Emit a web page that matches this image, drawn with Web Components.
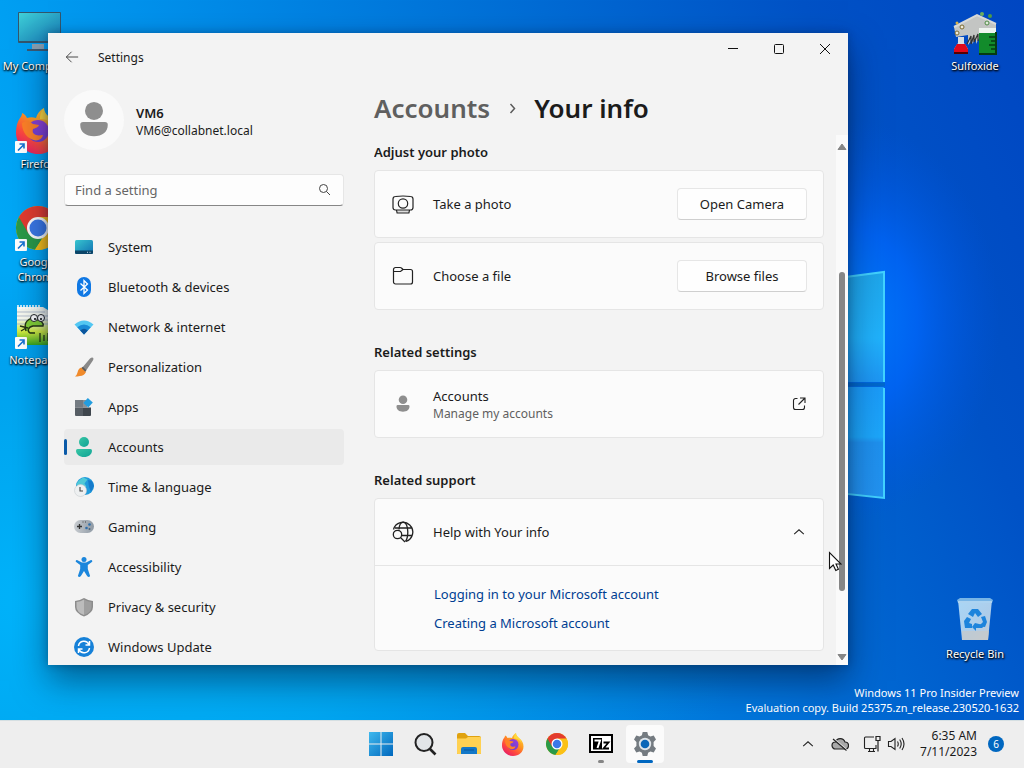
<!DOCTYPE html>
<html lang="en">
<head>
<meta charset="utf-8">
<title>Settings</title>
<style>
  html, body {
    height: 100%;
    margin: 0;
  }

  body {
    --font: "Noto Sans", "Open Sans", sans-serif;
    --text: #1b1b1b;
    --secondary-text: #5f5f5f;
    --accent: #0067c0;
    --card: #fbfbfb;
    --line: #e5e5e5;
    font-family: var(--font);
    font-size: 13px;
    line-height: 20px;
    color: var(--text);
    overflow: hidden;
  }
</style>
</head>
<body>
<desktop-shell>
  <desktop-icon slot="left" icon="computer" label="My Computer"></desktop-icon>
  <desktop-icon slot="left" icon="firefox" label="Firefox" shortcut></desktop-icon>
  <desktop-icon slot="left" icon="chrome" label="Google Chrome" shortcut></desktop-icon>
  <desktop-icon slot="left" icon="notepad" label="Notepad++" shortcut></desktop-icon>
  <desktop-icon slot="right" icon="sulfoxide" label="Sulfoxide"></desktop-icon>
  <desktop-icon slot="right" icon="bin" label="Recycle Bin" style="grid-row: 7"></desktop-icon>
  <settings-window slot="window"></settings-window>
  <task-bar slot="taskbar"></task-bar>
</desktop-shell>

<script>
const icons = {
  computer: ['0 0 48 48', `
    <defs><linearGradient id="a" x1="0" y1="0" x2="1" y2="1"><stop offset="0" stop-color="#3fd0d8"/><stop offset="1" stop-color="#1579b4"/></linearGradient></defs>
    <path d="M18 36h12v6H18z" fill="#8aa0b0"/><path d="M13 41h24v2H13z" fill="#3c5a73"/>
    <rect x="4" y="4" width="43" height="31" rx="1" fill="#33566c"/><rect x="5" y="5" width="41" height="28" fill="url(#a)"/>`],
  firefox: ['0 0 48 48', `
    <defs>
      <linearGradient id="a" x1=".9" y1="0" x2=".2" y2="1"><stop offset="0" stop-color="#ffe23f"/><stop offset=".4" stop-color="#ff9a1f"/><stop offset=".7" stop-color="#ff4a3d"/><stop offset="1" stop-color="#e3166d"/></linearGradient>
      <linearGradient id="b" x1="0" y1="1" x2="1" y2="0"><stop offset="0" stop-color="#5a3fd0"/><stop offset="1" stop-color="#a040d8"/></linearGradient>
    </defs>
    <path d="M6 12c1-1 2-3 2-5 3 1 4 3 5 5 3-1 6-1 9 0 1-4 4-8 8-10 0 5 3 7 7 11 5 4 8 9 8 16 0 11-9 19-21 19S2 38 2 27c0-6 1-11 4-15z" fill="url(#a)"/>
    <path d="M30 2c0 5 3 7 7 11 3 3 4 6 4 9-3-6-8-9-15-9 0-4 1-8 4-11z" fill="#ffd93b"/>
    <circle cx="24" cy="25" r="11" fill="url(#b)"/>
    <path d="M8 17c4-3 8-2 11 1l6 1c-1 3-4 3-6 4-1 3 0 5 3 6 3 1 5 0 7 0-1 5-7 7-12 4-6-3-9-9-9-16z" fill="#ff8126"/>`],
  chrome: ['0 0 48 48', `
    <circle cx="24" cy="24" r="22" fill="#fbc116"/>
    <path d="M24 24L4.900 13A22 22 0 0 0 21 45.800l11-17z" fill="#2a9a48"/>
    <path d="M24 24L43 13A22 22 0 0 0 4.900 13l9.500 16.500z" fill="#e33b2e"/>
    <path d="M24 13h19a22 22 0 0 1-22 32.800l10.500-16.300z" fill="#fbc116"/>
    <circle cx="24" cy="24" r="11" fill="#fff"/><circle cx="24" cy="24" r="8.500" fill="#3b78e7"/>`],
  notepad: ['0 0 48 48', `
    <defs><linearGradient id="a" x1="0" y1="0" x2="0" y2="1"><stop offset=".3" stop-color="#f8faf0"/><stop offset=".65" stop-color="#d0ec40"/><stop offset="1" stop-color="#37a51c"/></linearGradient></defs>
    <path d="M3 5h26l13 8v30H3z" fill="url(#a)"/>
    <path d="M3 10h28M3 14h31M3 18h36M3 22h38" stroke="#b5bfcc"/>
    <path d="M4 7V3m3 4V3m3 4V3m3 4V3m3 4V3m3 4V3m3 4V3m3 4V3" stroke="#fff" stroke-width="1.500"/>
    <path d="M12 29c-3-9 3-14 9-12 6 1 9 4 8 7H19c-5 1-6 5-3 7h5" fill="#83cf35" stroke="#263412" stroke-width="1.400"/>
    <circle cx="20" cy="16" r="3.500" fill="#fff" stroke="#222"/><circle cx="27" cy="16" r="3.500" fill="#fff" stroke="#222"/><circle cx="21" cy="17" r="1"/><circle cx="27" cy="17" r="1"/>
    <path d="M6 24l8 2M7 29l5-3m14 14v-9m4 8v-6m4 6v-8m4 8v-6" stroke="#263412" stroke-width="1.300" fill="none"/>`],
  sulfoxide: ['0 0 48 48', `
    <path d="M3 19l23-12 19 9v9H28v5l-3 6v-5l-4 5 1-6-5 7V27L5 29z" fill="#c3c5c3"/>
    <path d="M3 19l23-12 19 9" fill="none" stroke="#d7d9d7" stroke-width="2"/>
    <path d="M16 36l4-8v8l3-9v7l4-8v7" fill="none" stroke="#333" stroke-width="1.200"/>
    <circle cx="6" cy="15" r="1.500" fill="#d8b34a"/><circle cx="11" cy="19" r="2" fill="#efeadc" stroke="#7a6a30"/><circle cx="6" cy="25" r="2" fill="#efeadc" stroke="#7a6a30"/>
    <circle cx="31" cy="6" r="2" fill="#6fae5e"/><circle cx="36" cy="15" r="2" fill="#dfe8d8" stroke="#4e8a44"/><circle cx="39" cy="8" r="2" fill="#4e9a44"/>
    <path d="M7 29h6v6l4 6v4H3v-4l4-6z" fill="#d7dde4"/><path d="M6 36h8l3 5v4H3v-4z" fill="#e10a1c"/><path d="M3 45h14" stroke="#500" stroke-width="2"/>
    <path d="M28 21h17v25H28z" fill="#128b2b"/><path d="M28 20h17v5H28z" fill="#eef4ee"/>
    <path d="M45 24v22H28" fill="none" stroke="#063b12" stroke-width="2"/><path d="M38 29h6m-4 4h4m-6 4h6m-4 4h4" stroke="#063b12" stroke-width="1.600"/>`],
  bin: ['0 0 48 48', `
    <defs><linearGradient id="a" x1="0" y1="0" x2="1" y2="1"><stop offset="0" stop-color="#a9d6f6"/><stop offset=".6" stop-color="#adcdea"/><stop offset="1" stop-color="#c9ccd0"/></linearGradient></defs>
    <path d="M7 4h34l-4 40H11z" fill="url(#a)"/><path d="M6 4l3-2h30l3 2-1 3H7z" fill="#78b5e6"/><path d="M7 6h34" stroke="#e2f1fb"/>
    <path d="M11 35h27l-1 9H11z" fill="#c6c9c9" opacity=".7"/>
    <g fill="#1d84dc"><path d="M17 18l4-5h6l4 5-4 3-3-4-2 4z"/><path d="M30 21l4-1 2 6-2 5-6-1 4-4z"/><path d="M24 27l-3 4 4 4v-3h6l3-3-6-1z"/><path d="M16 21l-3 4 1 7h7v-4l-3-1 2-4z"/></g>`],

  back: ['0 0 16 16', `<path d="M15 8H1.500m6-6l-6 6 6 6" fill="none" stroke="#333"/>`],
  minimize: ['0 0 12 12', `<path d="M1 5.500h10" stroke="#111"/>`],
  maximize: ['0 0 12 12', `<rect x="1.500" y="1.500" width="9" height="9" rx="1" fill="none" stroke="#111"/>`],
  close: ['0 0 12 12', `<path d="M1 1l10 10M11 1L1 11" stroke="#111"/>`],
  user: ['0 0 32 40', `<circle cx="16" cy="10.500" r="9.500" fill="#8e8e8e"/><path d="M4.500 22h23a3 3 0 0 1 3 3c0 8-6 12-14.500 12S1.500 33 1.500 25a3 3 0 0 1 3-3z" fill="#8e8e8e"/>`],
  find: ['0 0 16 16', `<circle cx="7.500" cy="6.500" r="4" fill="none" stroke="#444"/><path d="M10.500 9.500L14 13" stroke="#444"/>`],
  chevron: ['0 0 16 16', `<path d="M6.500 4L10.500 8.500l-4 4.500" fill="none" stroke="#5a5a5a" stroke-width="1.500"/>`],
  up: ['0 0 16 16', `<path d="M2.500 10.500L8 5.500l5.500 5" fill="none" stroke="#222" stroke-width="1.200"/>`],
  camera: ['0 0 24 24', `<g fill="none" stroke="#222" stroke-width="1.200"><path d="M5.500 18l.6 3h11.800l.6-3" fill="#ddd"/><path d="M4.500 4.500Q12 3.500 19.500 4.500q2.500 0 2.500 2.500v8.500q0 2.500-2.500 2.500h-15Q2 18 2 15.500V7q0-2.500 2.500-2.500z"/><circle cx="12" cy="11.500" r="4.700"/></g>`],
  folder: ['0 0 24 24', `<path d="M2.500 17V5.500a2 2 0 0 1 2-2H9q1 0 2 1l1 1h7.500a2 2 0 0 1 2 2V18a2 2 0 0 1-2 2h-15a2 2 0 0 1-2-2zM3 7.500h6.500l2.500-2" fill="none" stroke="#222" stroke-width="1.200"/>`],
  external: ['0 0 16 16', `<path d="M6.500 2.500h-2a2 2 0 0 0-2 2v7a2 2 0 0 0 2 2h7a2 2 0 0 0 2-2v-2M9 2h5v5M14 2L7.500 8.500" fill="none" stroke="#222" stroke-width="1.100"/>`],
  globe: ['0 0 24 24', `<g fill="none" stroke="#222" stroke-width="1.300"><path d="M2.500 9.500A9.800 9.800 0 1 1 15 21.400M4 8h17M11 15.500h10.500"/><path d="M8 9.500c.3-4.500 2-7.300 4.200-7.300 2.800 0 4.600 4.300 4.600 9.800 0 4-.8 7.500-2.300 9.500"/><circle cx="6.500" cy="14.500" r="4.200"/><path d="M9.500 17.500l4.500 4.500"/></g>`],

  system: ['0 0 20 20', `
    <defs><linearGradient id="a" x1="0" y1="0" x2="1" y2="1"><stop offset="0" stop-color="#37c5cf"/><stop offset="1" stop-color="#1070b2"/></linearGradient></defs>
    <rect x="1" y="3" width="18" height="14" rx="1.500" fill="url(#a)"/><path d="M1 13.500h18v2a1.500 1.500 0 0 1-1.500 1.500h-15A1.500 1.500 0 0 1 1 15.500z" fill="#0c4568"/><path d="M13 15.300h1m1.500 0h1" stroke="#cde"/>`],
  bluetooth: ['0 0 20 20', `<rect x="3" width="14" height="20" rx="7" fill="#0f78e4"/><path d="M6.500 6.500l7 6.500-3.500 3.500v-13L13.500 7l-7 6.500" fill="none" stroke="#fff" stroke-width="1.300"/>`],
  network: ['0 0 20 20', `<path d="M.5 7.500Q10-.5 19.500 7.500L10 17.500z" fill="#53c7f2"/><path d="M3.300 10.300Q10 4.500 16.700 10.300L10 17.500z" fill="#1a8ad6"/><path d="M6.200 13.500Q10 10 13.800 13.500L10 17.500z" fill="#0c559c"/>`],
  brush: ['0 0 20 20', `<path d="M19 .8q1 1-.3 3L11.500 14.500 8 11 16 1.500Q18-.2 19 .8z" fill="#898989"/><path d="M7.500 10.500L12 15q-2 4-6 4-3 .5-5 .5 2-1.500 2.500-4 1-4.500 4-5z" fill="#f08a2b"/><path d="M8.800 9.800l3.500 3.500-1 1.500L7.600 11z" fill="#5a5a5a"/>`],
  apps: ['0 0 20 20', `<path d="M1 3h8v7.500H1z" fill="#747b82"/><path d="M1 10.500h8V19H2q-1 0-1-1z" fill="#565d64"/><path d="M9 10.500h8V18q0 1-1 1H9z" fill="#3f464d"/><path d="M9 3h4v7.500H9z" fill="#8b9196"/><path d="M13.800 1l5 4.500-4.500 5-5-4.500z" fill="#239ddf"/>`],
  accounts: ['0 0 20 20', `<defs><linearGradient id="a" x1="0" y1="0" x2="1" y2="1"><stop offset="0" stop-color="#38c6a4"/><stop offset="1" stop-color="#0fa396"/></linearGradient></defs><circle cx="10" cy="5" r="5" fill="url(#a)"/><path d="M3.500 12h13a1.500 1.500 0 0 1 1.500 1.500c0 4-3.500 6.500-8 6.500s-8-2.500-8-6.500A1.500 1.500 0 0 1 3.500 12z" fill="url(#a)"/>`],
  time: ['0 0 20 20', `<circle cx="11" cy="9" r="9" fill="#209bdc"/><path d="M2.500 8q1-5 7-7.500l4 2-3 4 2 3H8z" fill="#4fc9d6"/><path d="M14 3l4 1 2 5-3 6-2-5z" fill="#157bcb"/><circle cx="6.500" cy="13.500" r="6" fill="#eef0f1" stroke="#c7cdd0" stroke-width=".6"/><path d="M6 10v4h3" fill="none" stroke="#444" stroke-width="1.100"/>`],
  gaming: ['0 0 20 20', `<defs><linearGradient id="a" x1="0" y1="0" x2="1" y2="0"><stop offset="0" stop-color="#c8ccd0"/><stop offset="1" stop-color="#8e99a4"/></linearGradient></defs><rect y="3" width="20" height="13" rx="6.500" fill="url(#a)"/><path d="M5.500 7v5M3 9.500h5" stroke="#333" stroke-width="1.300"/><circle cx="12.500" cy="11" r="1.300" fill="#2e6eaa"/><circle cx="15.500" cy="7.500" r="1.300" fill="#2e6eaa"/><circle cx="15.500" cy="12" r="1" fill="#47637c"/><path d="M8.500 5h1m1.500 0h1" stroke="#444"/>`],
  access: ['0 0 20 20', `<circle cx="10" cy="2.500" r="2.500" fill="#1b86dc"/><path d="M3 3L8 5.500h4L17 3q1.600 0 1.200 1.800L13.800 8v4l2.300 7q-1.200 1.800-3 0L10 14l-3.100 5q-1.800 1.800-3 0l2.300-7V8L1.800 4.800Q1.400 3 3 3z" fill="#1b86dc"/>`],
  shield: ['0 0 20 20', `<path d="M10 1q4 2.500 9 3v6q0 6-9 9.500Q1 16 1 10V4q5-.5 9-3z" fill="#8c8c8c"/><path d="M10 2.500q3.500 2 7.500 2.500v5q0 5-7.500 8z" fill="#9f9f9f"/><path d="M10 2.500Q6.500 4.500 2.500 5v5q0 5 7.500 8z" fill="#bcbcbc"/>`],
  update: ['0 0 20 20', `<circle cx="10" cy="10" r="10" fill="#1681d8"/><path d="M4.500 9A5.500 5.500 0 0 1 15 7.500m.5-3.500v4h-4M15.500 11A5.500 5.500 0 0 1 5 12.500M4.500 16v-4h4" fill="none" stroke="#fff" stroke-width="1.500"/>`],

  start: ['0 0 24 24', `<defs><linearGradient id="a" gradientUnits="userSpaceOnUse" x1="0" y1="0" x2="24" y2="24"><stop offset="0" stop-color="#3fb9ee"/><stop offset="1" stop-color="#0067bd"/></linearGradient></defs><path d="M0 0h11.500v11.500H0zm12.500 0H24v11.500H12.500zM0 12.500h11.500V24H0zm12.500 0H24V24H12.500z" fill="url(#a)"/>`],
  search: ['0 0 24 24', `<circle cx="11" cy="10.500" r="8.500" fill="#e2e5e8" stroke="#222" stroke-width="2"/><path d="M17 17l5.500 5.500" stroke="#222" stroke-width="2.600"/>`],
  explorer: ['0 0 24 24', `<path d="M0 3q0-2 2-2h6l3 3h11q2 0 2 2v15q0 1-1 1H1q-1 0-1-1z" fill="#e0a20f"/><path d="M0 6.500h9l2-1.500h12q1 0 1 1v15q0 1-1 1H1q-1 0-1-1z" fill="#ffd152"/><path d="M4 22v-5q0-2 2-2h12q2 0 2 2v5z" fill="#1378c8"/><path d="M7 18h10" stroke="#0a569c"/>`],
  sevenzip: ['0 0 24 24', `<rect x="1" y="3" width="22" height="17" fill="#fff" stroke="#000" stroke-width="2"/><path d="M4 6h9v11.500H4z"/><path d="M5.500 8.500h5.500L8.500 16" fill="none" stroke="#fff" stroke-width="2"/><path d="M14.500 10.500h5l-5 6H20" fill="none" stroke="#000" stroke-width="1.800"/>`],
  gear: ['0 0 24 24', `<path d="M9.700 0h4.600l.8 3.300 2.300 1.300 3.300-1 2.300 4-2.400 2.400v4l2.400 2.400-2.300 4-3.300-1-2.300 1.300-.8 3.300H9.700l-.8-3.300-2.300-1.300-3.300 1-2.300-4L3.400 14v-4L1 7.600l2.300-4 3.300 1 2.300-1.300z" fill="#747b81"/><circle cx="12" cy="12" r="6.200" fill="#dfe5ea"/><circle cx="12" cy="12" r="4.300" fill="#0a66b8"/>`],
  cloud: ['0 0 18 18', `<path d="M4.500 14a3.500 3.500 0 0 1 0-7 5 5 0 0 1 9.500 0 3.500 3.500 0 0 1 0 7z" fill="#a9a9a9" stroke="#222" stroke-width="1.200"/><path d="M2.500 3.500L16 15" stroke="#eee" stroke-width="1.500"/><path d="M2 4l13.500 11.500" stroke="#222" stroke-width="1.200"/>`],
  lan: ['0 0 18 18', `<path d="M11 2H2.500q-1 0-1 1v9.500q0 1 1 1H13V10M5 16.500h7m-5.500-3v3m4-3v3" fill="none" stroke="#222" stroke-width="1.100"/><path d="M13 1.500h4v4h-4zM15 5.500v11" fill="none" stroke="#222" stroke-width="1.200"/>`],
  volume: ['0 0 18 18', `<path d="M1.500 6.500H4L8 3.500v11L4 11.500H1.500zM10.500 6.500q1.500 2.500 0 5M12.700 4.500q3 4.500 0 9M15 3q4 6 0 12" fill="none" stroke="#222" stroke-width="1.100"/>`],
  pointer: ['0 0 14 22', `<path d="M1.500 1.500v16l3.700-3.500 2.600 5.500 2.600-1.200L8 13h5z" fill="#fff" stroke="#111" stroke-width="1.100"/>`],
  arrow: ['0 0 12 12', `<path d="M3 9.500l6-6M4.500 3H9v4.500" fill="none" stroke="#1471d3" stroke-width="1.600"/>`],
  tri: ['0 0 10 8', `<path d="M5 1l4 5.500H1z" fill="#868686" stroke="#868686" stroke-linejoin="round"/>`]
};

class UiIcon extends HTMLElement {
  connectedCallback() {
    const [box, shape] = icons[this.getAttribute('name')];
    const root = this.attachShadow({ mode: 'open' });
    root.innerHTML = `
      <style>
        :host { display: block; flex: none; width: var(--icon-size, 20px); height: var(--icon-size, 20px); }
        svg { display: block; width: 100%; height: 100%; }
      </style>
      <svg viewBox="${box}" aria-hidden="true">${shape}</svg>
    `;
  }
}

const iconTemplate = document.createElement('template');
iconTemplate.innerHTML = `
  <style>
    :host { display: block; }
    .icon {
      display: flex;
      flex-direction: column;
      align-items: center;
      padding-top: 8px;
      color: #fff;
      font-size: 11px;
      line-height: 15px;
      text-align: center;
      text-decoration: none;
      text-shadow: 0 1px 2px #000, 1px 1px 2px #000;
    }
    .picture { position: relative; margin-bottom: 2px; --icon-size: 48px; }
    .shortcut {
      position: absolute;
      left: 1px;
      bottom: 1px;
      --icon-size: 12px;
      background: #fff;
      border-radius: 1px;
    }
    :host(:not([shortcut])) .shortcut { display: none; }
  </style>
  <a class="icon" href="#">
    <span class="picture">
      <ui-icon class="main"></ui-icon>
      <ui-icon class="shortcut" name="arrow"></ui-icon>
    </span>
    <span class="label"></span>
  </a>
`;

class DesktopIcon extends HTMLElement {
  connectedCallback() {
    const root = this.attachShadow({ mode: 'open' });
    const content = iconTemplate.content.cloneNode(true);
    content.querySelector('.main').setAttribute('name', this.getAttribute('icon'));
    content.querySelector('.label').textContent = this.getAttribute('label');
    root.appendChild(content);
  }
}

class DesktopShell extends HTMLElement {
  connectedCallback() {
    const root = this.attachShadow({ mode: 'open' });
    root.innerHTML = `
      <style>
        :host { display: flex; flex-direction: column; height: 100vh; background: #0047c4; }
        .desktop { flex: 1; min-height: 0; position: relative; display: flex; justify-content: space-between; padding-right: 11px; }
        .wallpaper { position: absolute; inset: 0; width: 100%; height: 100%; }
        .column { position: relative; display: grid; grid-auto-rows: 98px; align-content: start; width: 76px; }
        .watermark { position: absolute; right: 5px; bottom: 5px; color: #fff; font-size: 11px; line-height: 15px; text-align: right; }
        .watermark p { margin: 0; }
        ::slotted(settings-window) { position: absolute; inset: 33px 176px 55px 48px; }
        .pointer { position: absolute; right: 182px; bottom: 147px; width: 14px; height: 22px; }
      </style>
      <main class="desktop">
        <svg class="wallpaper" viewBox="0 0 1024 720" preserveAspectRatio="none" aria-hidden="true">
          <defs>
            <linearGradient id="sky" x1="0" y1=".3" x2="1" y2="0">
              <stop offset="0" stop-color="#00a8f6"/><stop offset=".2" stop-color="#0092ec"/>
              <stop offset=".5" stop-color="#0072d8"/><stop offset=".8" stop-color="#0052c6"/><stop offset="1" stop-color="#0046c2"/>
            </linearGradient>
            <radialGradient id="low"><stop offset="0" stop-color="#00b4fc"/><stop offset=".5" stop-color="#00a8f0" stop-opacity=".8"/><stop offset="1" stop-color="#0090e0" stop-opacity="0"/></radialGradient>
            <radialGradient id="glow"><stop offset="0" stop-color="#0080ff"/><stop offset=".45" stop-color="#0066fa" stop-opacity=".8"/><stop offset="1" stop-color="#0055e0" stop-opacity="0"/></radialGradient>
            <linearGradient id="pane" x1="0" y1="0" x2="0" y2="1"><stop offset="0" stop-color="#1ea6ea"/><stop offset=".6" stop-color="#20b2fc"/><stop offset="1" stop-color="#1d96f4"/></linearGradient>
            <linearGradient id="pane2" x1="0" y1="0" x2="0" y2="1"><stop offset="0" stop-color="#1a9bf8"/><stop offset=".45" stop-color="#1ca6fa"/><stop offset=".5" stop-color="#1e90ee"/><stop offset="1" stop-color="#2292f0"/></linearGradient>
          </defs>
          <rect width="1024" height="720" fill="url(#sky)"/>
          <ellipse cx="60" cy="600" rx="700" ry="330" fill="url(#low)"/>
          <ellipse cx="850" cy="320" rx="150" ry="200" fill="url(#glow)"/>
          <path d="M700 296l184-24v110H700z" fill="url(#pane)"/>
          <path d="M700 387h184v111l-184-20z" fill="url(#pane2)"/>
          <path d="M700 296l184-24v110M884 388v110l-184-20" fill="none" stroke="#42d2ff" stroke-width="2"/>
          <path d="M700 384.500h185" stroke="#0068cc" stroke-width="4"/>
        </svg>
        <div class="column"><slot name="left"></slot></div>
        <div class="column"><slot name="right"></slot></div>
        <div class="watermark">
          <p>Windows 11 Pro Insider Preview</p>
          <p>Evaluation copy. Build 25375.zn_release.230520-1632</p>
        </div>
        <slot name="window"></slot>
        <ui-icon class="pointer" name="pointer"></ui-icon>
      </main>
      <slot name="taskbar"></slot>
    `;
  }
}

const navTemplate = document.createElement('template');
navTemplate.innerHTML = `
  <style>
    :host { display: block; }
    a {
      display: flex;
      align-items: center;
      gap: 14px;
      height: 36px;
      padding-right: 12px;
      border-radius: 4px;
      color: inherit;
      text-decoration: none;
    }
    .mark { width: 3px; height: 16px; margin-right: -7px; border-radius: 2px; }
    :host([selected]) a { background: #eaeaea; }
    :host([selected]) .mark { background: #0a5aa8; }
  </style>
  <a href="#"><span class="mark"></span><ui-icon></ui-icon><slot></slot></a>
`;

class NavItem extends HTMLElement {
  connectedCallback() {
    const root = this.attachShadow({ mode: 'open' });
    const content = navTemplate.content.cloneNode(true);
    content.querySelector('ui-icon').setAttribute('name', this.getAttribute('icon'));
    if (this.hasAttribute('selected')) content.querySelector('a').setAttribute('aria-current', 'page');
    root.appendChild(content);
  }
}

class PushButton extends HTMLElement {
  connectedCallback() {
    const root = this.attachShadow({ mode: 'open' });
    root.innerHTML = `
      <style>
        :host { display: block; }
        button {
          display: block;
          min-width: 130px;
          height: 32px;
          padding: 0 12px;
          border: 1px solid #e6e6e6;
          border-bottom-color: #cfcfcf;
          border-radius: 4px;
          background: #fefefe;
          color: inherit;
          font: inherit;
        }
      </style>
      <button type="button"><slot></slot></button>
    `;
  }
}

const cardTemplate = document.createElement('template');
cardTemplate.innerHTML = `
  <style>
    :host {
      display: block;
      background: var(--card);
      border: 1px solid var(--line);
      border-radius: 4px;
    }
    .row { display: flex; align-items: center; min-height: 66px; padding: 0 16px; }
    .icon { display: flex; justify-content: center; width: 24px; margin-right: 18px; --icon-size: 24px; }
    .text { flex: 1; }
    .note { color: var(--secondary-text); font-size: 12px; line-height: 16px; }
    .body { border-top: 1px solid var(--line); padding: 18px 16px 17px 59px; }
    :host(:not([open])) .body { display: none; }
  </style>
  <div class="row">
    <div class="icon"><slot name="icon"></slot></div>
    <div class="text"><slot></slot><div class="note"><slot name="note"></slot></div></div>
    <slot name="action"></slot>
  </div>
  <div class="body"><slot name="body"></slot></div>
`;

class SettingCard extends HTMLElement {
  connectedCallback() {
    const root = this.attachShadow({ mode: 'open' });
    root.appendChild(cardTemplate.content.cloneNode(true));
  }
}

class SettingsWindow extends HTMLElement {
  connectedCallback() {
    const root = this.attachShadow({ mode: 'open' });
    root.innerHTML = `
      <style>
        :host {
          display: flex;
          flex-direction: column;
          background: #f3f3f3;
          box-shadow: 0 16px 32px rgba(0, 20, 50, .5), 0 0 8px rgba(0, 20, 50, .3);
          overflow: hidden;
        }
        h1, h2, p, ul { margin: 0; padding: 0; }
        button.plain { display: flex; align-items: center; justify-content: center; padding: 0; border: 0; background: none; }
        .title-bar { display: flex; align-items: flex-start; height: 48px; flex: none; }
        .back { width: 48px; height: 48px; --icon-size: 14px; }
        .title { flex: 1; padding-left: 2px; font-size: 12px; line-height: 50px; }
        .control { width: 46px; height: 32px; --icon-size: 12px; }
        .content { flex: 1; min-height: 0; display: grid; grid-template-columns: 280px 1fr; gap: 30px; padding-left: 16px; }
        .side { overflow: hidden; min-height: 0; padding-top: 9px; }
        .user { display: flex; align-items: center; gap: 12px; height: 60px; }
        .avatar { display: flex; align-items: center; justify-content: center; width: 60px; height: 60px; border-radius: 50%; background: #fafafa; --icon-size: 38px; }
        .who { padding-top: 4px; line-height: 18px; }
        .name { font-weight: 600; }
        .mail { font-size: 12px; }
        .find { display: flex; align-items: center; height: 32px; margin: 24px 0 23px; box-sizing: border-box; padding: 0 11px 0 10px; border: 1px solid #e6e6e6; border-bottom-color: #868686; border-radius: 4px; background: #fdfdfd; --icon-size: 16px; }
        input { flex: 1; min-width: 0; padding: 0; border: 0; outline: 0; background: none; color: inherit; font: inherit; }
        input::placeholder { color: #666; opacity: 1; }
        nav { display: flex; flex-direction: column; gap: 4px; }
        .main { display: flex; flex-direction: column; min-width: 0; min-height: 0; }
        .crumbs { display: flex; align-items: center; gap: 14px; height: 54px; font-size: 26px; font-weight: 600; line-height: 36px; flex: none; --icon-size: 16px; }
        .crumbs a { color: var(--secondary-text); text-decoration: none; }
        .crumbs h1 { font: inherit; }
        .scroller { flex: 1; min-height: 0; display: flex; gap: 12px; }
        .cards { flex: 1; min-width: 0; overflow: hidden; padding-top: 7px; }
        h2 { font-size: 13px; line-height: 20px; font-weight: 600; margin: 32px 0 8px; }
        h2:first-child { margin-top: 0; }
        setting-card + setting-card { margin-top: 4px; }
        .small { --icon-size: 18px; }
        .end { --icon-size: 16px; width: 16px; height: 16px; }
        .end.fold { --icon-size: 14px; }
        .links { display: flex; flex-direction: column; align-items: flex-start; gap: 9px; list-style: none; }
        .links a { color: #003e92; text-decoration: none; }
        .bar { display: flex; flex-direction: column; align-items: center; justify-content: space-between; width: 12px; box-sizing: border-box; padding: 7px 0 3px; background: #fafafa; --icon-size: 10px; }
        .thumb { flex: 1; width: 6px; margin: 120px 0 61px; border-radius: 3px; background: #868686; }
        .down { transform: rotate(180deg); }
      </style>
      <header class="title-bar">
        <button class="plain back" type="button" aria-label="Back"><ui-icon name="back"></ui-icon></button>
        <span class="title">Settings</span>
        <button class="plain control" type="button" aria-label="Minimize"><ui-icon name="minimize"></ui-icon></button>
        <button class="plain control" type="button" aria-label="Maximize"><ui-icon name="maximize"></ui-icon></button>
        <button class="plain control" type="button" aria-label="Close"><ui-icon name="close"></ui-icon></button>
      </header>
      <div class="content">
        <aside class="side">
          <div class="user">
            <div class="avatar"><ui-icon name="user"></ui-icon></div>
            <div class="who">
              <p class="name">VM6</p>
              <p class="mail">VM6@collabnet.local</p>
            </div>
          </div>
          <label class="find">
            <input type="text" placeholder="Find a setting" aria-label="Find a setting">
            <ui-icon name="find"></ui-icon>
          </label>
          <nav>
            <nav-item icon="system">System</nav-item>
            <nav-item icon="bluetooth">Bluetooth &amp; devices</nav-item>
            <nav-item icon="network">Network &amp; internet</nav-item>
            <nav-item icon="brush">Personalization</nav-item>
            <nav-item icon="apps">Apps</nav-item>
            <nav-item icon="accounts" selected>Accounts</nav-item>
            <nav-item icon="time">Time &amp; language</nav-item>
            <nav-item icon="gaming">Gaming</nav-item>
            <nav-item icon="access">Accessibility</nav-item>
            <nav-item icon="shield">Privacy &amp; security</nav-item>
            <nav-item icon="update">Windows Update</nav-item>
          </nav>
        </aside>
        <section class="main">
          <div class="crumbs">
            <a href="#">Accounts</a>
            <ui-icon name="chevron"></ui-icon>
            <h1>Your info</h1>
          </div>
          <div class="scroller">
            <div class="cards">
              <h2>Adjust your photo</h2>
              <setting-card>
                <ui-icon slot="icon" name="camera"></ui-icon>
                Take a photo
                <push-button slot="action">Open Camera</push-button>
              </setting-card>
              <setting-card>
                <ui-icon slot="icon" name="folder"></ui-icon>
                Choose a file
                <push-button slot="action">Browse files</push-button>
              </setting-card>
              <h2>Related settings</h2>
              <setting-card>
                <ui-icon class="small" slot="icon" name="user"></ui-icon>
                Accounts
                <span slot="note">Manage my accounts</span>
                <button class="plain end" slot="action" type="button" aria-label="Open accounts"><ui-icon name="external"></ui-icon></button>
              </setting-card>
              <h2>Related support</h2>
              <setting-card open>
                <ui-icon slot="icon" name="globe"></ui-icon>
                Help with Your info
                <button class="plain end fold" slot="action" type="button" aria-label="Collapse" aria-expanded="true"><ui-icon name="up"></ui-icon></button>
                <ul class="links" slot="body">
                  <li><a href="#">Logging in to your Microsoft account</a></li>
                  <li><a href="#">Creating a Microsoft account</a></li>
                </ul>
              </setting-card>
            </div>
            <div class="bar">
              <ui-icon name="tri"></ui-icon>
              <span class="thumb"></span>
              <ui-icon class="down" name="tri"></ui-icon>
            </div>
          </div>
        </section>
      </div>
    `;
  }
}

class TaskButton extends HTMLElement {
  connectedCallback() {
    const root = this.attachShadow({ mode: 'open' });
    root.innerHTML = `
      <style>
        :host { display: block; --icon-size: 24px; }
        button {
          display: flex;
          flex-direction: column;
          align-items: center;
          justify-content: space-between;
          width: 38px;
          height: 38px;
          padding: 7px 0 0;
          border: 0;
          border-radius: 4px;
          background: none;
        }
        .line { width: 6px; height: 3px; border-radius: 2px; }
        :host([running]) .line { background: #858585; }
        :host([active]) button { background: #fbfbfb; }
        :host([active]) .line { width: 16px; background: var(--accent); }
      </style>
      <button type="button" aria-label="${this.getAttribute('label')}">
        <ui-icon name="${this.getAttribute('icon')}"></ui-icon>
        <span class="line"></span>
      </button>
    `;
  }
}

class TaskBar extends HTMLElement {
  connectedCallback() {
    const root = this.attachShadow({ mode: 'open' });
    root.innerHTML = `
      <style>
        :host {
          display: grid;
          grid-template-columns: 1fr auto 1fr;
          align-items: center;
          height: 48px;
          box-sizing: border-box;
          border-top: 1px solid #d5dfe2;
          padding-bottom: 1px;
          background: #eeeeee;
          position: relative;
        }
        .apps { grid-column: 2; display: flex; gap: 6px; padding-left: 2px; }
        .tray { display: flex; align-items: center; justify-content: flex-end; padding-right: 20px; }
        button { display: flex; align-items: center; padding: 0; border: 0; background: none; color: inherit; font: inherit; --icon-size: 18px; }
        .more { --icon-size: 14px; margin-right: 16px; }
        .sync { margin-right: 14px; }
        .sound { gap: 6px; margin-right: 15px; }
        .clock { display: block; margin-right: 11px; font-size: 12px; line-height: 16px; text-align: right; }
        .clock time { display: block; }
        .badge { justify-content: center; width: 16px; height: 16px; border-radius: 50%; background: var(--accent); color: #fff; font-size: 10px; line-height: 16px; }
      </style>
      <div class="apps">
        <task-button icon="start" label="Start"></task-button>
        <task-button icon="search" label="Search"></task-button>
        <task-button icon="explorer" label="File Explorer"></task-button>
        <task-button icon="firefox" label="Firefox"></task-button>
        <task-button icon="chrome" label="Google Chrome"></task-button>
        <task-button icon="sevenzip" label="7-Zip" running></task-button>
        <task-button icon="gear" label="Settings" active></task-button>
      </div>
      <div class="tray">
        <button class="more" type="button" aria-label="Hidden icons"><ui-icon name="up"></ui-icon></button>
        <button class="sync" type="button" aria-label="OneDrive"><ui-icon name="cloud"></ui-icon></button>
        <button class="sound" type="button" aria-label="Network and volume"><ui-icon name="lan"></ui-icon><ui-icon name="volume"></ui-icon></button>
        <button class="clock" type="button"><time>6:35 AM</time><time>7/11/2023</time></button>
        <button class="badge" type="button">6</button>
      </div>
    `;
  }
}

window.customElements.define('ui-icon', UiIcon);
window.customElements.define('desktop-icon', DesktopIcon);
window.customElements.define('nav-item', NavItem);
window.customElements.define('push-button', PushButton);
window.customElements.define('setting-card', SettingCard);
window.customElements.define('settings-window', SettingsWindow);
window.customElements.define('task-button', TaskButton);
window.customElements.define('task-bar', TaskBar);
window.customElements.define('desktop-shell', DesktopShell);
</script>
</body>
</html>
